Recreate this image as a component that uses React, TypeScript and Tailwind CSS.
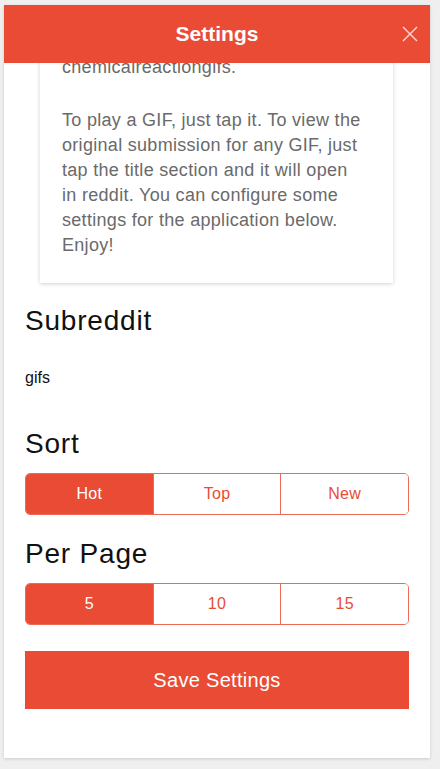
import { useState } from 'react';

function Segmented({
  options,
  value,
  onChange,
}: {
  options: string[];
  value: string;
  onChange: (v: string) => void;
}) {
  return (
    <div className="flex h-[42px] rounded-[5px] border border-[#ec6a57] overflow-hidden">
      {options.map((opt, i) => {
        const active = opt === value;
        return (
          <button
            key={opt}
            onClick={() => onChange(opt)}
            className={
              'flex-1 flex items-center justify-center text-[16px] tracking-[0.3px] ' +
              (i > 0 ? 'border-l border-[#ec6a57] ' : '') +
              (active ? 'bg-[#e94b35] text-white' : 'bg-white text-[#e94b35]')
            }
          >
            {opt}
          </button>
        );
      })}
    </div>
  );
}

export default function App() {
  const [sort, setSort] = useState('Hot');
  const [perPage, setPerPage] = useState('5');

  return (
    <div className="min-h-[769px] bg-[#efefef] pt-[5px] pl-[4px] font-['Liberation_Sans',Arial,sans-serif]">
      <div className="relative w-[426px] h-[753px] bg-white shadow-[0_1px_3px_rgba(0,0,0,0.15)] overflow-hidden">
        <div className="absolute top-0 left-0 right-0 h-[58px] bg-[#e94b35] z-10 flex items-center justify-center">
          <span className="text-white text-[21px] font-bold">Settings</span>
          <button className="absolute right-[12px] top-[21px] text-white/80">
            <svg width="16" height="16" viewBox="0 0 16 16" fill="none" stroke="currentColor" strokeWidth="1.4">
              <path d="M1 1L15 15M15 1L1 15" />
            </svg>
          </button>
        </div>

        {/* scrolled content; the card's top sits under the header */}
        <div className="px-[21px] pt-[3px]">
          <div className="ml-[15px] mr-[16px] bg-white shadow-[0_1px_4px_rgba(0,0,0,0.18)] pl-[22px] pr-[29px] pt-[47px] pb-[25px] text-[18px] leading-[25px] tracking-[0.3px] text-[#6a6a6a]">
            <p>chemicalreactiongifs.</p>
            <p className="mt-[28px]">
              To play a GIF, just tap it. To view the original submission for any GIF, just tap the title section and it will open in reddit. You can configure some settings for the application below. Enjoy!
            </p>
          </div>

          <h2 className="mt-[21px] text-[28px] leading-[34px] tracking-[0.8px] text-[#111]">Subreddit</h2>
          <p className="mt-[29px] text-[16px] leading-[22px] text-[#111]">gifs</p>

          <h2 className="mt-[38px] text-[28px] leading-[34px] tracking-[0.8px] text-[#111]">Sort</h2>
          <div className="mt-[12px]">
            <Segmented options={['Hot', 'Top', 'New']} value={sort} onChange={setSort} />
          </div>

          <h2 className="mt-[22px] text-[28px] leading-[34px] tracking-[0.8px] text-[#111]">Per Page</h2>
          <div className="mt-[12px]">
            <Segmented options={['5', '10', '15']} value={perPage} onChange={setPerPage} />
          </div>

          <button className="mt-[26px] w-full h-[58px] bg-[#e94b35] text-white text-[20px] tracking-[0.3px]">
            Save Settings
          </button>
        </div>
      </div>
    </div>
  );
}
